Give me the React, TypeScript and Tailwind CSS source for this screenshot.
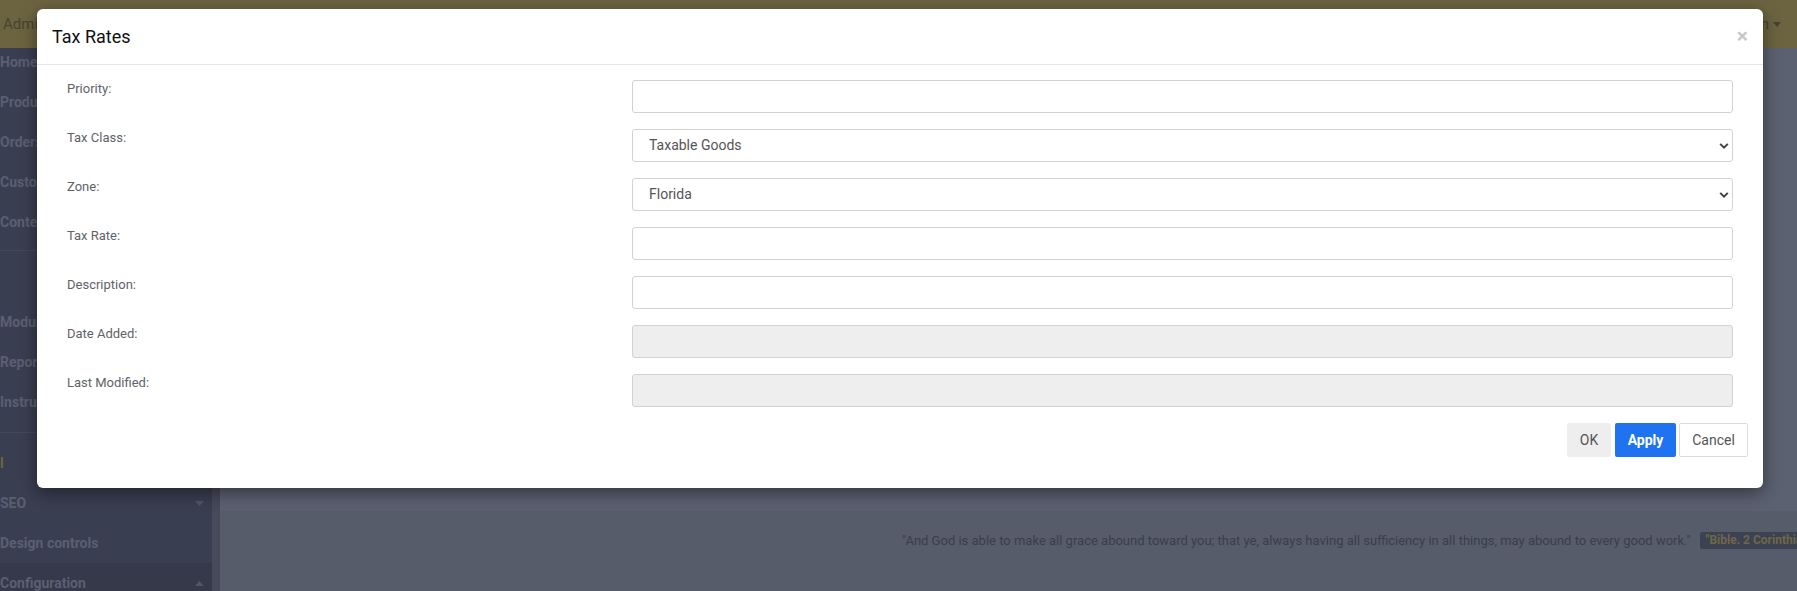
import React from "react";

const font = { fontFamily: "Roboto, 'Liberation Sans', sans-serif" };

const topItems = ["Home", "Products", "Orders", "Customers", "Content"];

function Chevron() {
  return (
    <svg width="10" height="7" viewBox="0 0 10 7" className="pointer-events-none absolute right-[4px] top-1/2 -translate-y-1/2">
      <path d="M1.2 1.4 L5 5.2 L8.8 1.4" fill="none" stroke="#444" strokeWidth="2" />
    </svg>
  );
}

function Row({ label, children }: { label: string; children: React.ReactNode }) {
  return (
    <div className="mb-4 grid grid-cols-[565px_1fr]">
      <div className="text-[13px] leading-[18px] text-[#5f6368]">{label}</div>
      {children}
    </div>
  );
}

function TextInput({ disabled }: { disabled?: boolean }) {
  return (
    <input
      disabled={disabled}
      className={
        "h-[33px] w-full rounded-[3px] border border-[#d2d2d2] px-4 text-[14px] " +
        (disabled ? "bg-[#eeeeee]" : "bg-white")
      }
    />
  );
}

function Select({ value }: { value: string }) {
  return (
    <div className="relative">
      <select
        defaultValue={value}
        className="h-[33px] w-full appearance-none rounded-[3px] border border-[#d2d2d2] bg-white px-4 text-[14px] text-[#555]"
      >
        <option>{value}</option>
      </select>
      <Chevron />
    </div>
  );
}

function Caret({ up }: { up?: boolean }) {
  return (
    <svg width="9" height="5" viewBox="0 0 9 5">
      <path d={up ? "M0 5h9L4.5 0z" : "M0 0h9L4.5 5z"} fill="#50556a" />
    </svg>
  );
}

export default function App() {
  return (
    <div style={font} className="relative h-[591px] w-full overflow-hidden bg-[#5b6070]">
      {/* top bar */}
      <div className="flex h-[48px] items-center justify-between bg-[#6c6441] pl-[3px] pr-[16px] text-[15px] text-[#48432f]">
        <span>Admin</span>
        <span className="flex items-center gap-1">
          Admin
          <svg width="8" height="5" viewBox="0 0 8 5"><path d="M0 0h8L4 5z" fill="#48432f" /></svg>
        </span>
      </div>

      <div className="flex h-[543px]">
        {/* sidebar */}
        <div className="w-[212px] shrink-0 overflow-hidden bg-[#3a3e51] text-[14px] font-bold text-[#5a5f72]">
          <div className="-mt-[6px]">
            {topItems.map((t) => (
              <div key={t} className="flex h-[40px] items-center whitespace-nowrap">
                {t}
              </div>
            ))}
          </div>
          <div className="mt-[8px] border-t border-[#444859]" />
          <div className="h-[51px]" />
          <div className="flex h-[40px] items-center">Modules</div>
          <div className="flex h-[40px] items-center">Reports</div>
          <div className="flex h-[40px] items-center">Instructions</div>
          <div className="mt-[10px] border-t border-[#444859]" />
          <div className="flex h-[40px] items-center pt-[20px] text-[#6e6446]">l</div>
          <div className="flex h-[40px] items-center justify-between pr-[8px] pt-[20px]">
            SEO
            <Caret />
          </div>
          <div className="flex h-[40px] items-center pt-[20px]">Design controls</div>
          <div className="mt-[10px] flex h-[40px] items-center justify-between bg-[#353949] pr-[8px]">
            Configuration
            <Caret up />
          </div>
        </div>
        <div className="w-[8px] shrink-0 bg-[#464a5a]" />

        {/* main */}
        <div className="flex min-w-0 flex-1 flex-col">
          <div className="h-[463px] shrink-0 bg-[#5c6171]" />
          <div className="flex flex-1 items-start overflow-hidden whitespace-nowrap bg-[#575c6b] pl-[682px] pt-[21px] text-[13px] leading-[18px] text-[#3a3e4d]">
            <span>
              "And God is able to make all grace abound toward you; that ye, always having all sufficiency in all things, may abound to every good work."
            </span>
            <span className="ml-[9px] rounded-[2px] bg-[#3d4253] px-[6px] text-[12px] font-bold leading-[17px] text-[#6f6748]">
              "Bible. 2 Corinthians 9:8"
            </span>
          </div>
        </div>
      </div>

      {/* modal */}
      <div className="absolute left-[37px] top-[9px] w-[1726px] rounded-[6px] bg-white shadow-[0_5px_18px_rgba(0,0,0,0.45)]">
        <div className="flex h-[56px] items-center justify-between border-b border-[#e5e5e5] px-[15px]">
          <h4 className="text-[18px] text-[#111]">Tax Rates</h4>
          <span className="text-[21px] font-bold leading-none text-[#c8c8c8]">×</span>
        </div>
        <div className="px-[30px] pt-[15px]">
          <Row label="Priority:"><TextInput /></Row>
          <Row label="Tax Class:"><Select value="Taxable Goods" /></Row>
          <Row label="Zone:"><Select value="Florida" /></Row>
          <Row label="Tax Rate:"><TextInput /></Row>
          <Row label="Description:"><TextInput /></Row>
          <Row label="Date Added:"><TextInput disabled /></Row>
          <Row label="Last Modified:"><TextInput disabled /></Row>
        </div>
        <div className="flex justify-end gap-[3px] px-[15px] pb-[31px]">
          <button className="h-[34px] w-[44px] rounded-[2px] bg-[#eeeeee] text-[14px] text-[#555]">OK</button>
          <button className="ml-[1px] h-[34px] w-[61px] rounded-[2px] bg-[#1f73f1] text-[14px] font-bold text-white">Apply</button>
          <button className="h-[34px] w-[69px] rounded-[2px] border border-[#dcdcdc] bg-white text-[14px] text-[#555]">Cancel</button>
        </div>
      </div>
    </div>
  );
}
